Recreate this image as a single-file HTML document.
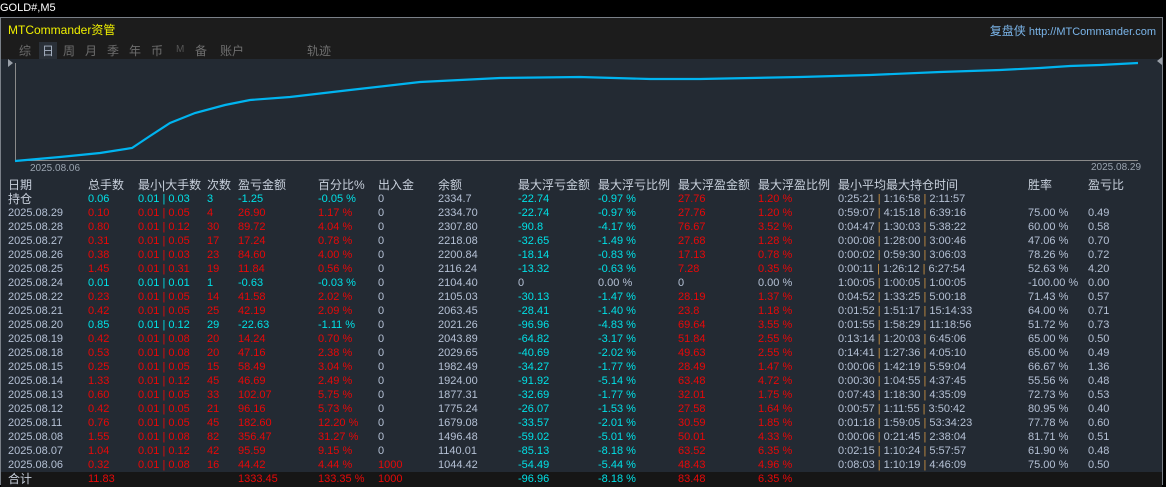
<!DOCTYPE html>
<html><head><meta charset="utf-8"><style>
*{margin:0;padding:0;box-sizing:border-box}
body{width:1166px;height:485px;background:#000;position:relative;overflow:hidden;font-family:"Liberation Sans","Noto Sans CJK SC",sans-serif;font-size:11px;color:#b4c0d4}
.top{position:absolute;left:0;top:0;width:1166px;height:17px;background:#000;color:#fff;font-size:11px;line-height:17px;padding-left:0}
.panel{position:absolute;left:0;top:17px;width:1163px;height:468px;background:#232a33;border:1px solid #7a8088;border-bottom:none}
.hdr{position:absolute;left:0;top:0;width:1161px;height:41px;background:#1c1c1c}
.t{position:absolute;white-space:nowrap}
.tab{position:absolute;top:24px;color:#6e6e6e;font-size:12px}
.r{position:absolute;left:0;width:1161px;height:14px;line-height:14px}
.r span{position:absolute;white-space:nowrap}
.c1{left:7px}.c2{left:87px}.c3{left:137px}.c4{left:206px}.c5{left:237px}.c6{left:317px}.c7{left:377px}.c8{left:437px}.c9{left:517px}.c10{left:597px}.c11{left:677px}.c12{left:757px}.c13{left:837px}.c14{left:1027px}.c15{left:1087px}
.R{color:#e80808}.C{color:#00e0e6}.G{color:#b4c0d4}
i{font-style:normal;color:#c89040}
.h{font-size:12px;color:#c8d0dc}
</style></head><body>
<div class="top">GOLD#,M5</div>
<div class="panel">
<div class="hdr">
<div class="t" style="left:7px;top:3px;color:#f0f000;font-size:12px">MTCommander资管</div>
<div class="t" style="right:6px;top:4px;color:#7ab4e8;font-size:11px"><span style="font-size:12px">复盘侠</span> http://MTCommander.com</div>
<div class="tab" style="left:18px">综</div>
<div class="tab" style="left:38px;background:#2a3038;padding:0 3px;color:#a8b4c4">日</div>
<div class="tab" style="left:62px">周</div>
<div class="tab" style="left:84px">月</div>
<div class="tab" style="left:106px">季</div>
<div class="tab" style="left:128px">年</div>
<div class="tab" style="left:150px">币</div>
<div class="tab" style="left:175px;font-size:10px;top:26px;color:#555">M</div>
<div class="tab" style="left:194px">备</div>
<div class="tab" style="left:219px">账户</div>
<div class="tab" style="left:306px">轨迹</div>
</div>
<svg style="position:absolute;left:-1px;top:-17px" width="1166" height="180">
<polygon points="8,58 8,66 13,62" fill="#9aa0a8"/>
<polygon points="1162,56 1162,64 1157,60" fill="#9aa0a8"/>
<line x1="15.5" y1="62" x2="15.5" y2="160" stroke="#8a8a8a"/>
<line x1="15" y1="159.5" x2="1138" y2="159.5" stroke="#8a8a8a"/>
<polyline fill="none" stroke="#00b4f0" stroke-width="2.2" points="15,160 60,156 100,152 132,147 150,135 170,122 195,112 225,104 250,99 290,96 350,89 420,81 500,77 580,76 650,78 700,78 800,76 870,74 940,71 1000,69 1040,67 1070,65 1100,64 1138,62"/>
<text x="30" y="170" fill="#9aa4b0" font-size="10" font-family="Liberation Sans">2025.08.06</text>
<text x="1091" y="169" fill="#9aa4b0" font-size="10" font-family="Liberation Sans">2025.08.29</text>
</svg>
<div style="position:absolute;top:160px;left:0">
<div class="r h" style="top:0"><span class="c1">日期</span><span class="c2">总手数</span><span class="c3">最小|大手数</span><span class="c4">次数</span><span class="c5">盈亏金额</span><span class="c6">百分比%</span><span class="c7">出入金</span><span class="c8">余额</span><span class="c9">最大浮亏金额</span><span class="c10">最大浮亏比例</span><span class="c11">最大浮盈金额</span><span class="c12">最大浮盈比例</span><span class="c13">最小平均最大持仓时间</span><span class="c14">胜率</span><span class="c15">盈亏比</span></div>
<div class="r" style="top:14px"><span class="c1 h">持仓</span><span class="c2 C">0.06</span><span class="c3 C">0.01 | 0.03</span><span class="c4 C">3</span><span class="c5 C">-1.25</span><span class="c6 C">-0.05 %</span><span class="c7">0</span><span class="c8">2334.7</span><span class="c9 C">-22.74</span><span class="c10 C">-0.97 %</span><span class="c11 R">27.76</span><span class="c12 R">1.20 %</span><span class="c13">0:25:21 <i>|</i> 1:16:58 <i>|</i> 2:11:57</span></div>
<div class="r R" style="top:28px"><span class="c1 G">2025.08.29</span><span class="c2">0.10</span><span class="c3">0.01 | 0.05</span><span class="c4">4</span><span class="c5">26.90</span><span class="c6">1.17 %</span><span class="c7 G">0</span><span class="c8 G">2334.70</span><span class="c9 C">-22.74</span><span class="c10 C">-0.97 %</span><span class="c11">27.76</span><span class="c12">1.20 %</span><span class="c13 G">0:59:07 <i>|</i> 4:15:18 <i>|</i> 6:39:16</span><span class="c14 G">75.00 %</span><span class="c15 G">0.49</span></div>
<div class="r R" style="top:42px"><span class="c1 G">2025.08.28</span><span class="c2">0.80</span><span class="c3">0.01 | 0.12</span><span class="c4">30</span><span class="c5">89.72</span><span class="c6">4.04 %</span><span class="c7 G">0</span><span class="c8 G">2307.80</span><span class="c9 C">-90.8</span><span class="c10 C">-4.17 %</span><span class="c11">76.67</span><span class="c12">3.52 %</span><span class="c13 G">0:04:47 <i>|</i> 1:30:03 <i>|</i> 5:38:22</span><span class="c14 G">60.00 %</span><span class="c15 G">0.58</span></div>
<div class="r R" style="top:56px"><span class="c1 G">2025.08.27</span><span class="c2">0.31</span><span class="c3">0.01 | 0.05</span><span class="c4">17</span><span class="c5">17.24</span><span class="c6">0.78 %</span><span class="c7 G">0</span><span class="c8 G">2218.08</span><span class="c9 C">-32.65</span><span class="c10 C">-1.49 %</span><span class="c11">27.68</span><span class="c12">1.28 %</span><span class="c13 G">0:00:08 <i>|</i> 1:28:00 <i>|</i> 3:00:46</span><span class="c14 G">47.06 %</span><span class="c15 G">0.70</span></div>
<div class="r R" style="top:70px"><span class="c1 G">2025.08.26</span><span class="c2">0.38</span><span class="c3">0.01 | 0.03</span><span class="c4">23</span><span class="c5">84.60</span><span class="c6">4.00 %</span><span class="c7 G">0</span><span class="c8 G">2200.84</span><span class="c9 C">-18.14</span><span class="c10 C">-0.83 %</span><span class="c11">17.13</span><span class="c12">0.78 %</span><span class="c13 G">0:00:02 <i>|</i> 0:59:30 <i>|</i> 3:06:03</span><span class="c14 G">78.26 %</span><span class="c15 G">0.72</span></div>
<div class="r R" style="top:84px"><span class="c1 G">2025.08.25</span><span class="c2">1.45</span><span class="c3">0.01 | 0.31</span><span class="c4">19</span><span class="c5">11.84</span><span class="c6">0.56 %</span><span class="c7 G">0</span><span class="c8 G">2116.24</span><span class="c9 C">-13.32</span><span class="c10 C">-0.63 %</span><span class="c11">7.28</span><span class="c12">0.35 %</span><span class="c13 G">0:00:11 <i>|</i> 1:26:12 <i>|</i> 6:27:54</span><span class="c14 G">52.63 %</span><span class="c15 G">4.20</span></div>
<div class="r C" style="top:98px"><span class="c1 G">2025.08.24</span><span class="c2">0.01</span><span class="c3">0.01 | 0.01</span><span class="c4">1</span><span class="c5">-0.63</span><span class="c6">-0.03 %</span><span class="c7 G">0</span><span class="c8 G">2104.40</span><span class="c9 G">0</span><span class="c10 G">0.00 %</span><span class="c11 G">0</span><span class="c12 G">0.00 %</span><span class="c13 G">1:00:05 <i>|</i> 1:00:05 <i>|</i> 1:00:05</span><span class="c14 G">-100.00 %</span><span class="c15 G">0.00</span></div>
<div class="r R" style="top:112px"><span class="c1 G">2025.08.22</span><span class="c2">0.23</span><span class="c3">0.01 | 0.05</span><span class="c4">14</span><span class="c5">41.58</span><span class="c6">2.02 %</span><span class="c7 G">0</span><span class="c8 G">2105.03</span><span class="c9 C">-30.13</span><span class="c10 C">-1.47 %</span><span class="c11">28.19</span><span class="c12">1.37 %</span><span class="c13 G">0:04:52 <i>|</i> 1:33:25 <i>|</i> 5:00:18</span><span class="c14 G">71.43 %</span><span class="c15 G">0.57</span></div>
<div class="r R" style="top:126px"><span class="c1 G">2025.08.21</span><span class="c2">0.42</span><span class="c3">0.01 | 0.05</span><span class="c4">25</span><span class="c5">42.19</span><span class="c6">2.09 %</span><span class="c7 G">0</span><span class="c8 G">2063.45</span><span class="c9 C">-28.41</span><span class="c10 C">-1.40 %</span><span class="c11">23.8</span><span class="c12">1.18 %</span><span class="c13 G">0:01:52 <i>|</i> 1:51:17 <i>|</i> 15:14:33</span><span class="c14 G">64.00 %</span><span class="c15 G">0.71</span></div>
<div class="r C" style="top:140px"><span class="c1 G">2025.08.20</span><span class="c2">0.85</span><span class="c3">0.01 | 0.12</span><span class="c4">29</span><span class="c5">-22.63</span><span class="c6">-1.11 %</span><span class="c7 G">0</span><span class="c8 G">2021.26</span><span class="c9">-96.96</span><span class="c10">-4.83 %</span><span class="c11 R">69.64</span><span class="c12 R">3.55 %</span><span class="c13 G">0:01:55 <i>|</i> 1:58:29 <i>|</i> 11:18:56</span><span class="c14 G">51.72 %</span><span class="c15 G">0.73</span></div>
<div class="r R" style="top:154px"><span class="c1 G">2025.08.19</span><span class="c2">0.42</span><span class="c3">0.01 | 0.08</span><span class="c4">20</span><span class="c5">14.24</span><span class="c6">0.70 %</span><span class="c7 G">0</span><span class="c8 G">2043.89</span><span class="c9 C">-64.82</span><span class="c10 C">-3.17 %</span><span class="c11">51.84</span><span class="c12">2.55 %</span><span class="c13 G">0:13:14 <i>|</i> 1:20:03 <i>|</i> 6:45:06</span><span class="c14 G">65.00 %</span><span class="c15 G">0.50</span></div>
<div class="r R" style="top:168px"><span class="c1 G">2025.08.18</span><span class="c2">0.53</span><span class="c3">0.01 | 0.08</span><span class="c4">20</span><span class="c5">47.16</span><span class="c6">2.38 %</span><span class="c7 G">0</span><span class="c8 G">2029.65</span><span class="c9 C">-40.69</span><span class="c10 C">-2.02 %</span><span class="c11">49.63</span><span class="c12">2.55 %</span><span class="c13 G">0:14:41 <i>|</i> 1:27:36 <i>|</i> 4:05:10</span><span class="c14 G">65.00 %</span><span class="c15 G">0.49</span></div>
<div class="r R" style="top:182px"><span class="c1 G">2025.08.15</span><span class="c2">0.25</span><span class="c3">0.01 | 0.05</span><span class="c4">15</span><span class="c5">58.49</span><span class="c6">3.04 %</span><span class="c7 G">0</span><span class="c8 G">1982.49</span><span class="c9 C">-34.27</span><span class="c10 C">-1.77 %</span><span class="c11">28.49</span><span class="c12">1.47 %</span><span class="c13 G">0:00:06 <i>|</i> 1:42:19 <i>|</i> 5:59:04</span><span class="c14 G">66.67 %</span><span class="c15 G">1.36</span></div>
<div class="r R" style="top:196px"><span class="c1 G">2025.08.14</span><span class="c2">1.33</span><span class="c3">0.01 | 0.12</span><span class="c4">45</span><span class="c5">46.69</span><span class="c6">2.49 %</span><span class="c7 G">0</span><span class="c8 G">1924.00</span><span class="c9 C">-91.92</span><span class="c10 C">-5.14 %</span><span class="c11">63.48</span><span class="c12">4.72 %</span><span class="c13 G">0:00:30 <i>|</i> 1:04:55 <i>|</i> 4:37:45</span><span class="c14 G">55.56 %</span><span class="c15 G">0.48</span></div>
<div class="r R" style="top:210px"><span class="c1 G">2025.08.13</span><span class="c2">0.60</span><span class="c3">0.01 | 0.05</span><span class="c4">33</span><span class="c5">102.07</span><span class="c6">5.75 %</span><span class="c7 G">0</span><span class="c8 G">1877.31</span><span class="c9 C">-32.69</span><span class="c10 C">-1.77 %</span><span class="c11">32.01</span><span class="c12">1.75 %</span><span class="c13 G">0:07:43 <i>|</i> 1:18:30 <i>|</i> 4:35:09</span><span class="c14 G">72.73 %</span><span class="c15 G">0.53</span></div>
<div class="r R" style="top:224px"><span class="c1 G">2025.08.12</span><span class="c2">0.42</span><span class="c3">0.01 | 0.05</span><span class="c4">21</span><span class="c5">96.16</span><span class="c6">5.73 %</span><span class="c7 G">0</span><span class="c8 G">1775.24</span><span class="c9 C">-26.07</span><span class="c10 C">-1.53 %</span><span class="c11">27.58</span><span class="c12">1.64 %</span><span class="c13 G">0:00:57 <i>|</i> 1:11:55 <i>|</i> 3:50:42</span><span class="c14 G">80.95 %</span><span class="c15 G">0.40</span></div>
<div class="r R" style="top:238px"><span class="c1 G">2025.08.11</span><span class="c2">0.76</span><span class="c3">0.01 | 0.05</span><span class="c4">45</span><span class="c5">182.60</span><span class="c6">12.20 %</span><span class="c7 G">0</span><span class="c8 G">1679.08</span><span class="c9 C">-33.57</span><span class="c10 C">-2.01 %</span><span class="c11">30.59</span><span class="c12">1.85 %</span><span class="c13 G">0:01:18 <i>|</i> 1:59:05 <i>|</i> 53:34:23</span><span class="c14 G">77.78 %</span><span class="c15 G">0.60</span></div>
<div class="r R" style="top:252px"><span class="c1 G">2025.08.08</span><span class="c2">1.55</span><span class="c3">0.01 | 0.08</span><span class="c4">82</span><span class="c5">356.47</span><span class="c6">31.27 %</span><span class="c7 G">0</span><span class="c8 G">1496.48</span><span class="c9 C">-59.02</span><span class="c10 C">-5.01 %</span><span class="c11">50.01</span><span class="c12">4.33 %</span><span class="c13 G">0:00:06 <i>|</i> 0:21:45 <i>|</i> 2:38:04</span><span class="c14 G">81.71 %</span><span class="c15 G">0.51</span></div>
<div class="r R" style="top:266px"><span class="c1 G">2025.08.07</span><span class="c2">1.04</span><span class="c3">0.01 | 0.12</span><span class="c4">42</span><span class="c5">95.59</span><span class="c6">9.15 %</span><span class="c7 G">0</span><span class="c8 G">1140.01</span><span class="c9 C">-85.13</span><span class="c10 C">-8.18 %</span><span class="c11">63.52</span><span class="c12">6.35 %</span><span class="c13 G">0:02:15 <i>|</i> 1:10:24 <i>|</i> 5:57:57</span><span class="c14 G">61.90 %</span><span class="c15 G">0.48</span></div>
<div class="r R" style="top:280px"><span class="c1 G">2025.08.06</span><span class="c2">0.32</span><span class="c3">0.01 | 0.08</span><span class="c4">16</span><span class="c5">44.42</span><span class="c6">4.44 %</span><span class="c7">1000</span><span class="c8 G">1044.42</span><span class="c9 C">-54.49</span><span class="c10 C">-5.44 %</span><span class="c11">48.43</span><span class="c12">4.96 %</span><span class="c13 G">0:08:03 <i>|</i> 1:10:19 <i>|</i> 4:46:09</span><span class="c14 G">75.00 %</span><span class="c15 G">0.50</span></div>
<div class="r R" style="top:294px;height:15px;background:#161616"><span class="c1 h">合计</span><span class="c2">11.83</span><span class="c5">1333.45</span><span class="c6">133.35 %</span><span class="c7">1000</span><span class="c9 C">-96.96</span><span class="c10 C">-8.18 %</span><span class="c11">83.48</span><span class="c12">6.35 %</span></div>
</div>
</div>
</body></html>
